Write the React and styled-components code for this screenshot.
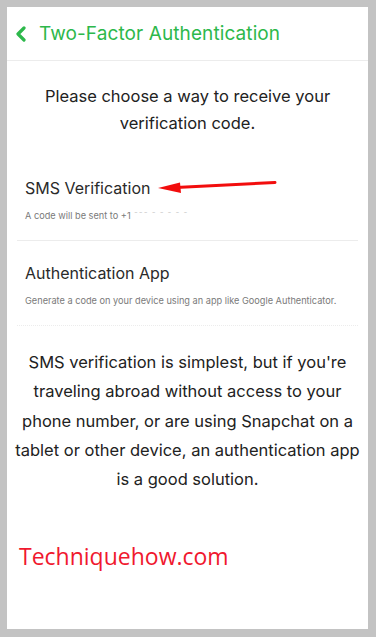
import React from "react";
import styled, { createGlobalStyle } from "styled-components";

const GlobalStyle = createGlobalStyle`
  html, body {
    margin: 0;
    padding: 0;
    background: #c3c3c3;
  }
  * { box-sizing: border-box; }
`;

const Frame = styled.div`
  width: 376px;
  height: 637px;
  padding: 7px 8px 8px 7px;
  background: #c3c3c3;
`;

const Screen = styled.div`
  height: 100%;
  background: #ffffff;
  display: flex;
  flex-direction: column;
  font-family: Inter, "Noto Sans", sans-serif;
`;

const Header = styled.header`
  height: 54px;
  display: flex;
  align-items: center;
  gap: 11px;
  padding: 0 0 0 7px;
  border-bottom: 1px solid #ececec;
`;

const BackIcon = styled.svg`
  width: 14px;
  height: 16px;
  flex: none;
`;

const Title = styled.h1`
  margin: 0;
  font-size: 19px;
  font-weight: 400;
  color: #2db84b;
  letter-spacing: 0.1px;
`;

const Intro = styled.p`
  margin: 22px 0 0;
  text-align: center;
  font-size: 16.5px;
  line-height: 27px;
  color: #222;
`;

const Options = styled.div`
  margin-top: 40px;
  padding: 0 10px;
`;

const Option = styled.div`
  position: relative;
  padding: 21px 8px 18px;
  border-bottom: 1px ${(p) => (p.$dotted ? "dotted" : "solid")} #ececec;
  &:first-child { padding-top: 0; }
`;

const OptionTitle = styled.div`
  font-size: 16px;
  line-height: 22px;
  color: #2a2a2a;
`;

const OptionNote = styled.div`
  margin-top: 11px;
  font-size: 9.2px;
  line-height: 12px;
  color: #7a7a7a;
`;

const Masked = styled.span`
  color: #c8c8c8;
  letter-spacing: 0.5px;
`;

const Arrow = styled.svg`
  position: absolute;
  left: 141px;
  top: -2px;
  width: 122px;
  height: 16px;
  overflow: visible;
`;

const Explain = styled.p`
  margin: 22px 0 0;
  padding: 0 6px;
  text-align: center;
  font-size: 16.5px;
  line-height: 29.3px;
  color: #222;
`;

const Watermark = styled.div`
  margin: 46px 0 0 12px;
  font-family: "Open Sans", "Noto Sans", sans-serif;
  font-size: 23px;
  color: #f0182e;
`;

export default function App() {
  return (
    <>
      <GlobalStyle />
      <Frame>
        <Screen>
          <Header>
            <BackIcon viewBox="0 0 14 16">
              <path d="M10 2 L4 8 L10 14" fill="none" stroke="#2db84b" strokeWidth="3.2" strokeLinecap="round" strokeLinejoin="round" />
            </BackIcon>
            <Title>Two-Factor Authentication</Title>
          </Header>

          <Intro>
            Please choose a way to receive your
            <br />
            verification code.
          </Intro>

          <Options>
            <Option>
              <OptionTitle>SMS Verification</OptionTitle>
              <OptionNote>
                A code will be sent to +1<Masked> ˉˉˉ ˉ ˉ ˉ ˉ ˉ</Masked>
              </OptionNote>
              <Arrow viewBox="0 0 122 16">
                <path d="M18 12.5 L117 7.5" stroke="#f20d0d" strokeWidth="3" strokeLinecap="round" />
                <path d="M0 13 L22 7.5 L23 18 Z" fill="#f20d0d" />
              </Arrow>
            </Option>
            <Option $dotted>
              <OptionTitle>Authentication App</OptionTitle>
              <OptionNote>Generate a code on your device using an app like Google Authenticator.</OptionNote>
            </Option>
          </Options>

          <Explain>
            SMS verification is simplest, but if you're traveling abroad without access to your phone number, or are using Snapchat on a tablet or other device, an authentication app is a good solution.
          </Explain>

          <Watermark>Techniquehow.com</Watermark>
        </Screen>
      </Frame>
    </>
  );
}
